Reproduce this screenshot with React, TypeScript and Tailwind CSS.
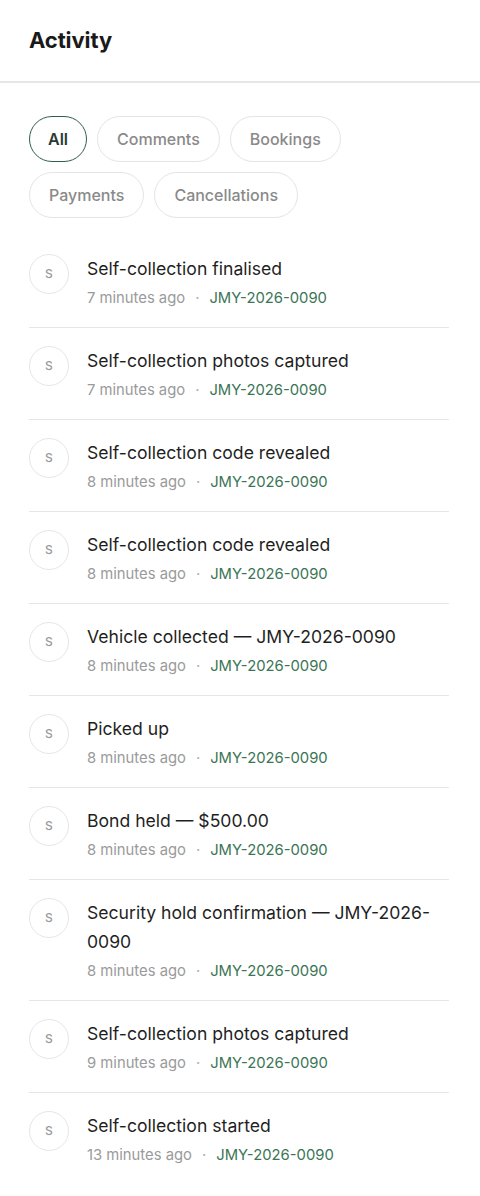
const items = [
  { title: 'Self-collection finalised', time: '7 minutes ago' },
  { title: 'Self-collection photos captured', time: '7 minutes ago' },
  { title: 'Self-collection code revealed', time: '8 minutes ago' },
  { title: 'Self-collection code revealed', time: '8 minutes ago' },
  { title: 'Vehicle collected — JMY-2026-0090', time: '8 minutes ago' },
  { title: 'Picked up', time: '8 minutes ago' },
  { title: 'Bond held — $500.00', time: '8 minutes ago' },
  { title: 'Security hold confirmation — JMY-2026-0090', time: '8 minutes ago' },
  { title: 'Self-collection photos captured', time: '9 minutes ago' },
  { title: 'Self-collection started', time: '13 minutes ago' },
]

const filters = ['All', 'Comments', 'Bookings', 'Payments', 'Cancellations']

export default function App() {
  return (
    <div className="min-h-screen bg-white text-[#1f1f1f] [font-family:Inter,'Noto_Sans',sans-serif]">
      {/* header */}
      <header className="flex h-[83px] items-center border-b-2 border-[#e6e6e6] px-[29px]">
        <h1 className="pb-[1px] text-[22px] font-bold tracking-[-0.1px] text-[#1a1a1a]">Activity</h1>
      </header>

      {/* filters */}
      <div className="flex flex-wrap gap-x-[10px] gap-y-[10px] px-[29px] pt-[33px] pb-[18px]">
        {filters.map((f, i) => (
          <button
            key={f}
            className={
              i === 0
                ? 'h-[46px] rounded-full border-[1.5px] border-[#2f5e4b] px-[18px] text-[16px] font-semibold text-[#2b3a33]'
                : 'h-[46px] rounded-full border border-[#e4e4e4] px-[19px] text-[16px] font-medium text-[#8a8a8a]'
            }
          >
            {f}
          </button>
        ))}
      </div>

      {/* list */}
      <ul className="pl-[29px] pr-[31px]">
        {items.map((it, i) => (
          <li
            key={i}
            className={`flex gap-[18px] py-[18px] ${i < items.length - 1 ? 'border-b border-[#e6e6e6]' : ''}`}
          >
            <div className="grid h-[40px] w-[40px] shrink-0 place-items-center rounded-full border border-[#e6e6e6] text-[12px] font-medium text-[#9a9a9a]">
              S
            </div>
            <div className="min-w-0 flex-1">
              <p className="text-[17.6px] leading-[29px] text-[#1f1f1f]">{it.title}</p>
              <p className="mt-[4px] flex items-center text-[14.8px] leading-[22px]">
                <span className="text-[#9a9a9a]">{it.time}</span>
                <span className="mx-[10px] text-[#b0b0b0]">·</span>
                <span className="text-[#3b7556]">JMY-2026-0090</span>
              </p>
            </div>
          </li>
        ))}
      </ul>
    </div>
  )
}
